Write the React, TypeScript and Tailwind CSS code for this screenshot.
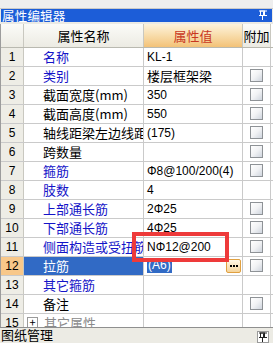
import React from "react";

type Row = {
  n: number;
  name: string;
  blue?: boolean;
  value?: string;
  check?: boolean;
};

const rows: Row[] = [
  { n: 1, name: "名称", blue: true, value: "KL-1" },
  { n: 2, name: "类别", blue: true, value: "楼层框架梁", check: true },
  { n: 3, name: "截面宽度(mm)", value: "350", check: true },
  { n: 4, name: "截面高度(mm)", value: "550", check: true },
  { n: 5, name: "轴线距梁左边线距离(mm)", value: "(175)", check: true },
  { n: 6, name: "跨数量", value: "", check: true },
  { n: 7, name: "箍筋", blue: true, value: "Φ8@100/200(4)", check: true },
  { n: 8, name: "肢数", blue: true, value: "4" },
  { n: 9, name: "上部通长筋", blue: true, value: "2Φ25", check: true },
  { n: 10, name: "下部通长筋", blue: true, value: "4Φ25", check: true },
  { n: 11, name: "侧面构造或受扭筋", blue: true, value: "NΦ12@200", check: true },
  { n: 12, name: "拉筋", blue: true, value: "(A6)", check: true },
  { n: 13, name: "其它箍筋", blue: true, value: "" },
  { n: 14, name: "备注", value: "", check: true },
];

const font = {
  fontFamily: '"Noto Sans CJK SC", "Liberation Sans", sans-serif',
};

const valueFont = {
  fontFamily: '"Liberation Sans", "Noto Sans CJK SC", sans-serif',
};

function CheckBox() {
  return (
    <div className="w-[13px] h-[13px] border border-[#8e9296] bg-gradient-to-br from-white via-[#f1f2f4] to-[#cfd5de]" />
  );
}

function PinIcon({ color }: { color: string }) {
  return (
    <svg width="8" height="10" viewBox="0 0 8 10">
      <rect x="0" y="0.5" width="8" height="1" fill={color} />
      <rect x="1.5" y="1" width="4" height="4.5" fill="none" stroke={color} strokeWidth="1" />
      <rect x="4" y="1.5" width="1.5" height="4" fill={color} />
      <rect x="0" y="5" width="8" height="1" fill={color} />
      <rect x="3" y="6" width="1" height="4" fill={color} />
    </svg>
  );
}

export default function App() {
  return (
    <div
      className="relative w-[273px] h-[343px] overflow-hidden bg-[#ebeae4] flex flex-col"
      style={font}
    >
      {/* top strip */}
      <div className="h-[9px] border-b border-[#c9c9c9] bg-[#eeeeee]" />

      {/* title bar */}
      <div className="h-[13px] mx-[1px] bg-[#1c5dd8] flex items-center justify-between pl-[1px] pr-[5px]">
        <span className="text-white text-[12.5px] leading-[13px] tracking-[0.2px]">属性编辑器</span>
        <PinIcon color="#ffffff" />
      </div>

      <div className="h-[2px]" />

      {/* grid */}
      <div className="h-[307px] overflow-hidden border-l border-[#9c9c9c] bg-white">
        {/* header */}
        <div className="flex h-[24px] border-b border-[#b9b9b0] text-[13px] leading-[23px] text-black">
          <div className="w-[23px] border-r border-[#c9c8c0] bg-gradient-to-b from-[#fbfbf8] to-[#ecebe3]" />
          <div className="w-[120px] border-r border-[#c9c8c0] bg-gradient-to-b from-[#fbfbf8] to-[#ecebe3] text-center">
            属性名称
          </div>
          <div className="w-[99px] border-r border-[#c9c8c0] bg-gradient-to-b from-[#fdf3dc] via-[#f8dcaa] to-[#f3c277] text-center text-[#c9381f]">
            属性值
          </div>
          <div className="w-[28px] border-r border-[#c9c8c0] bg-gradient-to-b from-[#fbfbf8] to-[#ecebe3] text-center">
            附加
          </div>
        </div>

        {rows.map((r) => {
          const sel = r.n === 12;
          return (
            <div key={r.n} className="flex h-[19px] border-b border-[#cacaca] text-[13px] leading-[18px]">
              <div
                className={
                  "w-[23px] border-r border-[#c9c8c0] text-center text-[12px] text-black " +
                  (sel ? "bg-[#f8c88a]" : "bg-[#eeede6]")
                }
                style={{ fontFamily: '"Liberation Sans", sans-serif' }}
              >
                {r.n}
              </div>
              <div
                className={
                  "w-[120px] border-r border-[#cacaca] pl-[19px] whitespace-nowrap overflow-hidden " +
                  (sel ? "bg-[#316ac5] text-white" : r.blue ? "text-[#1414c8]" : "text-black")
                }
              >
                {r.name}
              </div>
              <div
                className="w-[99px] border-r border-[#cacaca] pl-[3px] whitespace-nowrap overflow-hidden flex items-center text-black text-[12px]"
                style={valueFont}
              >
                {sel ? (
                  <>
                    <span className="bg-[#316ac5] text-white px-[1px] leading-[15px]">{r.value}</span>
                    <div className="ml-auto mr-[1px] w-[15px] h-[14px] rounded-[2px] border border-[#e0a040] bg-gradient-to-b from-[#fff8e8] to-[#f5d49a] flex items-center justify-center gap-[1px]">
                      <span className="w-[2px] h-[2px] bg-black" />
                      <span className="w-[2px] h-[2px] bg-black" />
                      <span className="w-[2px] h-[2px] bg-black" />
                    </div>
                  </>
                ) : r.n === 2 ? (
                  <span className="text-[13px]" style={font}>{r.value}</span>
                ) : (
                  <span>{r.value}</span>
                )}
              </div>
              <div className="w-[28px] border-r border-[#cacaca] flex items-center justify-center">
                {r.check && <CheckBox />}
              </div>
            </div>
          );
        })}

        {/* row 15 */}
        <div className="flex h-[19px] text-[13px] leading-[18px]">
          <div
            className="w-[23px] border-r border-[#c9c8c0] bg-[#eeede6] text-center text-[12px] text-black"
            style={{ fontFamily: '"Liberation Sans", sans-serif' }}
          >
            15
          </div>
          <div className="w-[120px] border-r border-[#cacaca] pl-[3px] flex items-start gap-[6px] text-[#8a8a8a] whitespace-nowrap">
            <div className="mt-[3px] w-[11px] h-[11px] border border-[#9a9a9a] bg-white flex items-center justify-center text-black text-[11px] leading-[10px]">
              +
            </div>
            <span>其它属性</span>
          </div>
          <div className="w-[99px] border-r border-[#cacaca]" />
          <div className="w-[28px] border-r border-[#cacaca]" />
        </div>
      </div>

      {/* bottom tab strip */}
      <div className="flex-1 border-t border-[#8f8f8f] bg-[#ecebe4] flex items-start justify-between pl-[1px] pr-[4px]">
        <span className="text-[13px] leading-[16px] text-black -mt-[1px]">图纸管理</span>
        <div className="mt-[3px] w-[12px] h-[12px] border border-[#9a9a9a] bg-white flex items-center justify-center">
          <PinIcon color="#222222" />
        </div>
      </div>

      {/* red annotation box */}
      <div className="absolute left-[132px] top-[232px] w-[97px] h-[30px] border-[4px] border-[#ee3a3a]" />
    </div>
  );
}
